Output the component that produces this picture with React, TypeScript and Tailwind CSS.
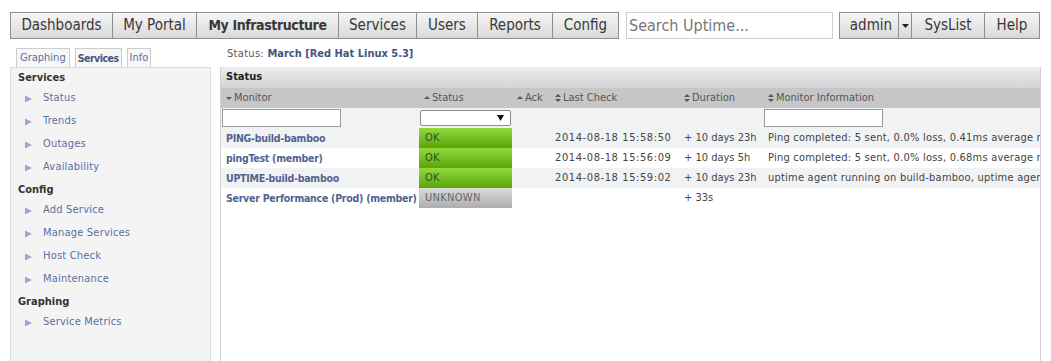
import React from "react";

const font = { fontFamily: '"DejaVu Sans Condensed", "DejaVu Sans", sans-serif' };

const navItems = [
  { label: "Dashboards", w: 102 },
  { label: "My Portal", w: 84 },
  { label: "My Infrastructure", w: 142, bold: true },
  { label: "Services", w: 78 },
  { label: "Users", w: 61 },
  { label: "Reports", w: 75 },
  { label: "Config", w: 66 },
];

function Tri() {
  return (
    <svg width="9" height="9" viewBox="0 0 9 9" className="shrink-0">
      <polygon points="1,1.5 8,5 1,8.5" fill="#a4a4c8" />
    </svg>
  );
}

function SideLink({ label }: { label: string }) {
  return (
    <div className="flex items-center h-[20px] mb-[3px] pl-[13px]">
      <Tri />
      <span className="ml-[10px] text-[11px] text-[#5b6fa3] tracking-[0.2px]">{label}</span>
    </div>
  );
}

function SideHead({ label }: { label: string }) {
  return <div className="h-[20px] flex items-center pl-[7px] text-[11px] font-bold text-[#333]">{label}</div>;
}

function Arrow({ kind }: { kind: "down" | "up" | "both" }) {
  if (kind === "down")
    return (
      <svg width="6" height="6" viewBox="0 0 6 6" className="inline-block mr-[2px]">
        <polygon points="0,2 6,2 3,5" fill="#555" />
      </svg>
    );
  if (kind === "up")
    return (
      <svg width="6" height="6" viewBox="0 0 6 6" className="inline-block mr-[2px]">
        <polygon points="0,4 6,4 3,1" fill="#555" />
      </svg>
    );
  return (
    <svg width="6" height="8" viewBox="0 0 6 8" className="inline-block mr-[2px]">
      <polygon points="0,3 6,3 3,0" fill="#555" />
      <polygon points="0,5 6,5 3,8" fill="#555" />
    </svg>
  );
}

const rows = [
  { name: "PING-build-bamboo", status: "OK", last: "2014-08-18 15:58:50", dur: "+ 10 days 23h", info: "Ping completed: 5 sent, 0.0% loss, 0.41ms average round trip time" },
  { name: "pingTest (member)", status: "OK", last: "2014-08-18 15:56:09", dur: "+ 10 days 5h", info: "Ping completed: 5 sent, 0.0% loss, 0.68ms average round trip time" },
  { name: "UPTIME-build-bamboo", status: "OK", last: "2014-08-18 15:59:02", dur: "+ 10 days 23h", info: "uptime agent running on build-bamboo, uptime agent version" },
  { name: "Server Performance (Prod) (member)", status: "UNKNOWN", last: "", dur: "+ 33s", info: "" },
];

export default function App() {
  return (
    <div className="w-[1051px] h-[361px] overflow-hidden bg-white relative" style={font}>
      {/* Top nav */}
      <div className="flex items-start pt-[12px] pl-[10px]">
        <div className="flex h-[27px] border border-[#8e8e8e]">
          {navItems.map((n, i) => (
            <div
              key={n.label}
              className={`flex items-center justify-center text-[#383838] bg-gradient-to-b from-[#f6f6f6] to-[#d9d9d9] ${i > 0 ? "border-l border-[#8e8e8e]" : ""} ${n.bold ? "font-bold text-[14px] tracking-[-0.4px]" : "text-[15px]"}`}
              style={{ width: n.w - (i > 0 ? 0 : 1) }}
            >
              {n.label}
            </div>
          ))}
        </div>
        <div className="ml-[7px] w-[207px] h-[27px] border border-[#cfcfcf] flex items-center pl-[2px] text-[16px] text-[#777]">
          Search Uptime...
        </div>
        <div className="ml-[6px] flex h-[27px] border border-[#8e8e8e]">
          <div className="w-[58px] flex items-center justify-center pl-[4px] text-[15px] text-[#383838] bg-gradient-to-b from-[#f6f6f6] to-[#d9d9d9]">admin</div>
          <div className="w-[13px] flex items-center justify-center border-l border-[#8e8e8e] bg-gradient-to-b from-[#f6f6f6] to-[#d9d9d9]">
            <svg width="7" height="4" viewBox="0 0 7 4"><polygon points="0,0 7,0 3.5,4" fill="#222" /></svg>
          </div>
          <div className="w-[73px] flex items-center justify-center border-l border-[#8e8e8e] text-[15px] text-[#383838] bg-gradient-to-b from-[#f6f6f6] to-[#d9d9d9]">SysList</div>
          <div className="w-[55px] flex items-center justify-center border-l border-[#8e8e8e] text-[15px] text-[#383838] bg-gradient-to-b from-[#f6f6f6] to-[#d9d9d9]">Help</div>
        </div>
      </div>

      <div className="flex mt-[9px]">
        {/* Sidebar */}
        <div className="ml-[10px] w-[201px] flex flex-col">
          <div className="flex h-[19px] pl-[6px] gap-[5px]">
            <div className="h-[20px] px-[3px] border border-[#cccccc] border-b-0 bg-[#f7f7f7] text-[11px] text-[#5b6fa3] flex items-center">Graphing</div>
            <div className="h-[20px] px-[2px] border border-[#cccccc] border-b-0 bg-[#f7f7f7] text-[10.5px] tracking-[-0.5px] font-bold text-[#44557f] flex items-center">Services</div>
            <div className="h-[20px] px-[2px] border border-[#cccccc] border-b-0 bg-[#f7f7f7] text-[11px] text-[#5b6fa3] flex items-center">Info</div>
          </div>
          <div className="h-[300px] bg-[#f4f4f4] border border-[#dcdcdc]">
            <SideHead label="Services" />
            <SideLink label="Status" />
            <SideLink label="Trends" />
            <SideLink label="Outages" />
            <SideLink label="Availability" />
            <SideHead label="Config" />
            <SideLink label="Add Service" />
            <SideLink label="Manage Services" />
            <SideLink label="Host Check" />
            <SideLink label="Maintenance" />
            <SideHead label="Graphing" />
            <SideLink label="Service Metrics" />
          </div>
        </div>

        {/* Main */}
        <div className="ml-[9px] w-[821px] flex flex-col">
          <div className="h-[19px] pl-[7px] text-[11px] text-[#555] tracking-[0.3px] flex items-start -mt-[2px] pb-[2px] box-content">
            Status:&nbsp;<span className="font-bold text-[#44557f] tracking-normal">March [Red Hat Linux 5.3]</span>
          </div>
          <div className="h-[300px] border-l border-r border-[#d2d2d6] overflow-hidden">
            <div className="h-[21px] bg-gradient-to-b from-[#ecedef] to-[#d2d4d8] flex items-center pl-[5px] text-[11px] font-bold text-[#222]">Status</div>
            <table className="border-collapse text-[11px] table-fixed" style={{ width: 900 }}>
              <colgroup>
                <col style={{ width: 198 }} />
                <col style={{ width: 93 }} />
                <col style={{ width: 39 }} />
                <col style={{ width: 129 }} />
                <col style={{ width: 84 }} />
                <col style={{ width: 357 }} />
              </colgroup>
              <thead>
                <tr className="h-[20px] bg-[#c6c6c6] text-[#555]">
                  <th className="text-left font-normal pl-[5px] whitespace-nowrap"><Arrow kind="down" />Monitor</th>
                  <th className="text-left font-normal pl-[5px] whitespace-nowrap"><Arrow kind="up" />Status</th>
                  <th className="text-left font-normal pl-[5px] whitespace-nowrap"><Arrow kind="up" />Ack</th>
                  <th className="text-left font-normal pl-[4px] whitespace-nowrap"><Arrow kind="both" />Last Check</th>
                  <th className="text-left font-normal pl-[4px] whitespace-nowrap"><Arrow kind="both" />Duration</th>
                  <th className="text-left font-normal pl-[4px] whitespace-nowrap"><Arrow kind="both" />Monitor Information</th>
                </tr>
                <tr className="h-[20px] bg-[#f1f2f4]">
                  <td className="pl-[1px]"><div className="w-[119px] h-[18px] bg-white border border-[#999]" /></td>
                  <td className="pl-[1px]">
                    <div className="w-[91px] h-[16px] bg-white border border-[#8c8c8c] rounded-[2px] flex items-center justify-end pr-[6px]">
                      <svg width="7" height="6" viewBox="0 0 7 6"><polygon points="0,0 7,0 3.5,6" fill="#111" /></svg>
                    </div>
                  </td>
                  <td />
                  <td />
                  <td />
                  <td><div className="w-[119px] h-[18px] bg-white border border-[#999]" /></td>
                </tr>
              </thead>
              <tbody>
                {rows.map((r, i) => (
                  <tr key={r.name} className={`h-[20px] ${i % 2 === 0 ? "bg-[#f1f2f4]" : "bg-white"}`}>
                    <td className="pl-[5px] pt-[1px] font-bold text-[10.5px] tracking-[-0.25px] text-[#52638f] whitespace-nowrap">{r.name}</td>
                    <td className="p-0">
                      <div
                        className={`h-[20px] flex items-center pl-[6px] pt-[1px] tracking-[0.3px] ${
                          r.status === "OK"
                            ? "bg-gradient-to-b from-[#92d93f] to-[#5aa600] text-[#36501c]"
                            : "bg-gradient-to-b from-[#dadada] to-[#adadad] text-[#666]"
                        }`}
                      >
                        {r.status}
                      </div>
                    </td>
                    <td />
                    <td className="pl-[4px] pt-[1px] text-[#444] tracking-[0.6px] whitespace-nowrap">{r.last}</td>
                    <td className="pl-[4px] pt-[1px] text-[#444] whitespace-nowrap">{r.dur}</td>
                    <td className="pl-[4px] pt-[1px] text-[#444] tracking-[0.22px] whitespace-nowrap overflow-hidden">{r.info}</td>
                  </tr>
                ))}
              </tbody>
            </table>
          </div>
        </div>
      </div>
    </div>
  );
}
